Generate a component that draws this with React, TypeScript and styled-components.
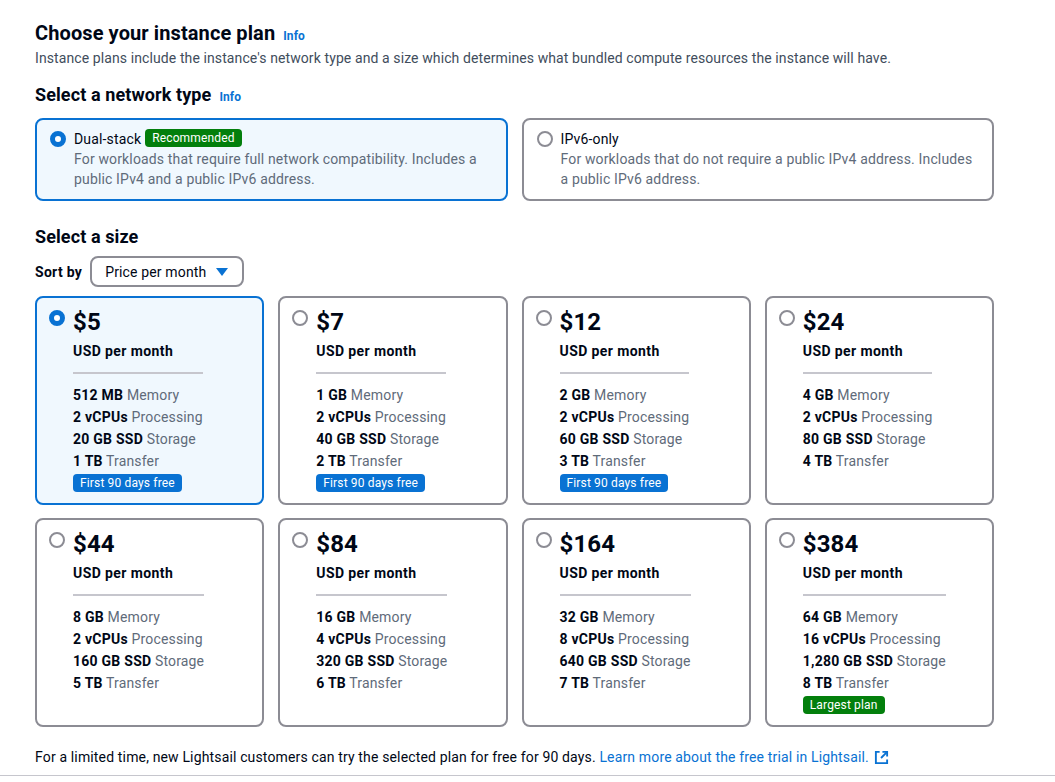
import React from 'react';
import styled, { createGlobalStyle } from 'styled-components';

const GlobalStyle = createGlobalStyle`
  body {
    margin: 0;
    background: #ffffff;
    font-family: Roboto, "Open Sans", sans-serif;
    color: #000716;
    letter-spacing: 0.15px;
    -webkit-font-smoothing: antialiased;
  }
  * {
    box-sizing: border-box;
  }
`;

const Page = styled.div`
  width: 1055px;
  padding: 22px 61px 8px 35px;
  border-bottom: 1px solid #c6c6cd;
`;

const Heading = styled.h2<{ $size: number }>`
  margin: 0;
  font-size: ${(p) => p.$size}px;
  line-height: ${(p) => (p.$size === 20 ? 22 : 24)}px;
  font-weight: 700;
  color: #000716;
  letter-spacing: 0.1px;
  display: flex;
  align-items: baseline;
  gap: 8px;
`;

const InfoLink = styled.a`
  font-size: 12px;
  font-weight: 700;
  color: #0972d3;
  text-decoration: none;
`;

const Description = styled.p`
  margin: 1px 0 0;
  font-size: 14px;
  line-height: 20px;
  letter-spacing: 0.1px;
  color: #414d5c;
`;

const Section = styled.section<{ $top: number }>`
  margin-top: ${(p) => p.$top}px;
`;

const NetworkRow = styled.div`
  display: grid;
  grid-template-columns: 1fr 1fr;
  gap: 14px;
  margin-top: 9px;
`;

const Tile = styled.div<{ $selected?: boolean }>`
  display: flex;
  gap: 8px;
  border: 2px solid ${(p) => (p.$selected ? '#0972d3' : '#8c8c94')};
  background: ${(p) => (p.$selected ? '#f0f8fe' : '#ffffff')};
  border-radius: 8px;
`;

const NetworkTile = styled(Tile)`
  padding: 9px 14px 10px 13px;
  min-height: 82px;
`;

const Radio = styled.span<{ $checked?: boolean }>`
  flex: none;
  width: 16px;
  height: 16px;
  border-radius: 50%;
  margin-top: 2px;
  background: #ffffff;
  border: ${(p) => (p.$checked ? '5px solid #0972d3' : '2px solid #8c8c94')};
`;

const TileBody = styled.div`
  display: flex;
  flex-direction: column;
`;

const TileTitle = styled.div`
  display: flex;
  align-items: center;
  gap: 4px;
  font-size: 14px;
  line-height: 20px;
  color: #000716;
`;

const Badge = styled.span<{ $tone: 'green' | 'blue'; $gap?: number }>`
  display: inline-block;
  align-self: flex-start;
  margin-top: ${(p) => p.$gap ?? 0}px;
  font-size: 12px;
  line-height: 18px;
  padding: 0 7px;
  border-radius: 4px;
  color: #ffffff;
  background: ${(p) => (p.$tone === 'green' ? '#037f0c' : '#0972d3')};
`;

const TileText = styled.div`
  font-size: 14px;
  line-height: 20px;
  color: #5f6b7a;
`;

const SortRow = styled.div`
  display: flex;
  align-items: center;
  gap: 8px;
  margin-top: 7px;
`;

const SortLabel = styled.span`
  font-size: 14px;
  font-weight: 700;
  letter-spacing: 0.3px;
  color: #000716;
`;

const Select = styled.button`
  display: flex;
  align-items: center;
  justify-content: space-between;
  width: 154px;
  height: 31px;
  padding: 0 14px 0 13px;
  border: 2px solid #8c8c94;
  border-radius: 8px;
  background: #ffffff;
  font-family: inherit;
  font-size: 14px;
  letter-spacing: 0.15px;
  color: #000716;
`;

const SizeGrid = styled.div`
  display: grid;
  grid-template-columns: repeat(4, 1fr);
  column-gap: 14px;
  row-gap: 13px;
  margin-top: 9px;
`;

const SizeTile = styled(Tile)`
  height: 209px;
  padding: 10px 12px 10px 12px;
`;

const PlanBody = styled.div`
  display: inline-flex;
  flex-direction: column;
  align-self: flex-start;
`;

const Price = styled.div`
  font-size: 24px;
  line-height: 28px;
  font-weight: 700;
  color: #000716;
`;

const PriceUnit = styled.div`
  margin-top: 5px;
  font-size: 14px;
  line-height: 20px;
  font-weight: 700;
  letter-spacing: 0.4px;
  color: #000716;
`;

const Divider = styled.hr`
  width: 100%;
  margin: 11px 0 10px;
  border: none;
  border-top: 2px solid #c6c6cd;
`;

const Spec = styled.div`
  font-size: 14px;
  line-height: 22px;
  color: #5f6b7a;

  b {
    color: #000716;
    font-weight: 700;
    letter-spacing: 0.25px;
  }
`;

const Footer = styled.p`
  margin: 20px 0 0;
  font-size: 14px;
  line-height: 20px;
  color: #000716;

  a {
    color: #0972d3;
    text-decoration: none;
  }
  svg {
    vertical-align: -3px;
    margin-left: 5px;
  }
`;

type Plan = {
  price: string;
  memory: string;
  cpus: string;
  ssd: string;
  transfer: string;
  badge?: { label: string; tone: 'green' | 'blue' };
};

const free = { label: 'First 90 days free', tone: 'blue' as const };

const plans: Plan[] = [
  { price: '$5', memory: '512 MB', cpus: '2 vCPUs', ssd: '20 GB SSD', transfer: '1 TB', badge: free },
  { price: '$7', memory: '1 GB', cpus: '2 vCPUs', ssd: '40 GB SSD', transfer: '2 TB', badge: free },
  { price: '$12', memory: '2 GB', cpus: '2 vCPUs', ssd: '60 GB SSD', transfer: '3 TB', badge: free },
  { price: '$24', memory: '4 GB', cpus: '2 vCPUs', ssd: '80 GB SSD', transfer: '4 TB' },
  { price: '$44', memory: '8 GB', cpus: '2 vCPUs', ssd: '160 GB SSD', transfer: '5 TB' },
  { price: '$84', memory: '16 GB', cpus: '4 vCPUs', ssd: '320 GB SSD', transfer: '6 TB' },
  { price: '$164', memory: '32 GB', cpus: '8 vCPUs', ssd: '640 GB SSD', transfer: '7 TB' },
  {
    price: '$384',
    memory: '64 GB',
    cpus: '16 vCPUs',
    ssd: '1,280 GB SSD',
    transfer: '8 TB',
    badge: { label: 'Largest plan', tone: 'green' },
  },
];

const ExternalIcon = () => (
  <svg width="15" height="15" viewBox="0 0 16 16" fill="none" stroke="#0972d3" strokeWidth="2">
    <path d="M9 2h5v5" />
    <path d="M14 2 7.5 8.5" />
    <path d="M6 2H2v12h12v-4" />
  </svg>
);

const Caret = () => (
  <svg width="12" height="8" viewBox="0 0 12 8">
    <path d="M0 0h12L6 8z" fill="#0972d3" />
  </svg>
);

const App = () => {
  return (
    <Page>
      <GlobalStyle />
      <Heading $size={20}>
        Choose your instance plan <InfoLink>Info</InfoLink>
      </Heading>
      <Description>
        Instance plans include the instance's network type and a size which determines what bundled compute
        resources the instance will have.
      </Description>

      <Section $top={15}>
        <Heading $size={18}>
          Select a network type <InfoLink>Info</InfoLink>
        </Heading>
        <NetworkRow>
          <NetworkTile $selected>
            <Radio $checked />
            <TileBody>
              <TileTitle>
                Dual-stack <Badge $tone="green">Recommended</Badge>
              </TileTitle>
              <TileText>
                For workloads that require full network compatibility. Includes a public IPv4 and a public IPv6
                address.
              </TileText>
            </TileBody>
          </NetworkTile>
          <NetworkTile>
            <Radio />
            <TileBody>
              <TileTitle>IPv6-only</TileTitle>
              <TileText>
                For workloads that do not require a public IPv4 address. Includes a public IPv6 address.
              </TileText>
            </TileBody>
          </NetworkTile>
        </NetworkRow>
      </Section>

      <Section $top={24}>
        <Heading $size={18}>Select a size</Heading>
        <SortRow>
          <SortLabel>Sort by</SortLabel>
          <Select>
            Price per month <Caret />
          </Select>
        </SortRow>
        <SizeGrid>
          {plans.map((plan, i) => (
            <SizeTile key={plan.price} $selected={i === 0}>
              <Radio $checked={i === 0} />
              <PlanBody>
                <Price>{plan.price}</Price>
                <PriceUnit>USD per month</PriceUnit>
                <Divider />
                <Spec>
                  <b>{plan.memory}</b> Memory
                </Spec>
                <Spec>
                  <b>{plan.cpus}</b> Processing
                </Spec>
                <Spec>
                  <b>{plan.ssd}</b> Storage
                </Spec>
                <Spec>
                  <b>{plan.transfer}</b> Transfer
                </Spec>
                {plan.badge && (
                  <Badge $tone={plan.badge.tone} $gap={2}>
                    {plan.badge.label}
                  </Badge>
                )}
              </PlanBody>
            </SizeTile>
          ))}
        </SizeGrid>
      </Section>

      <Footer>
        For a limited time, new Lightsail customers can try the selected plan for free for 90 days.{' '}
        <a>
          Learn more about the free trial in Lightsail.
          <ExternalIcon />
        </a>
      </Footer>
    </Page>
  );
};

export default App;
